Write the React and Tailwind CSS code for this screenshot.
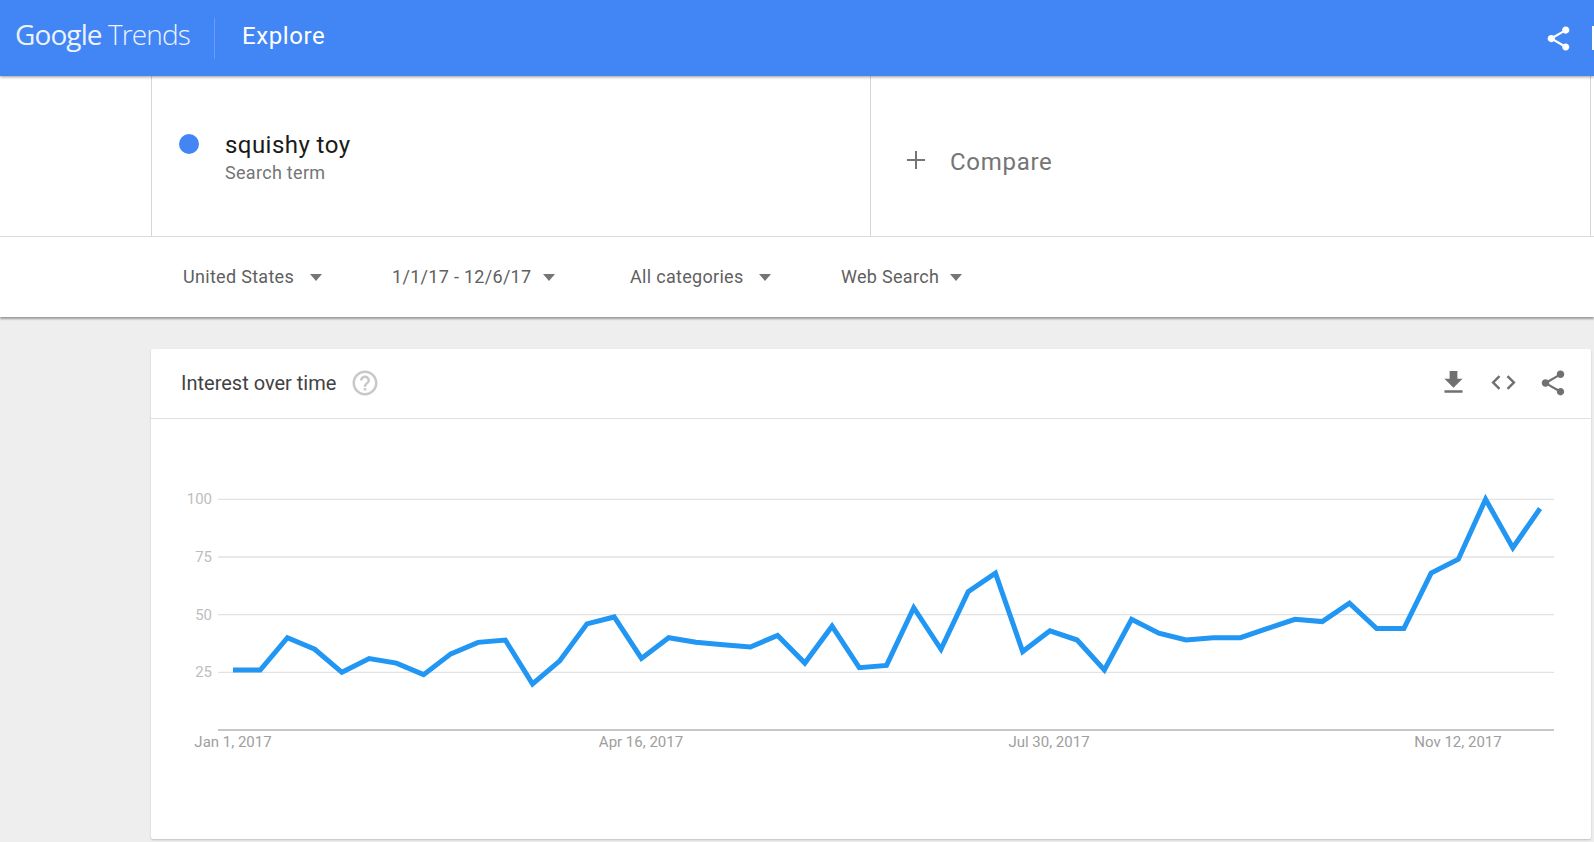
import React from 'react';

const trendData = [26, 26, 40, 35, 25, 31, 29, 24, 33, 38, 39, 20, 30, 46, 49, 31, 40, 38, 37, 36, 41, 29, 45, 27, 28, 53, 35, 60, 68, 34, 43, 39, 26, 48, 42, 39, 40, 40, 44, 48, 47, 55, 44, 44, 68, 74, 100, 79, 96];

const SHARE_PATH = 'M18 16.08c-.76 0-1.44.3-1.96.77L8.91 12.7c.05-.23.09-.46.09-.7s-.04-.47-.09-.7l7.05-4.11c.54.5 1.25.81 2.04.81 1.66 0 3-1.34 3-3s-1.34-3-3-3-3 1.34-3 3c0 .24.04.47.09.7L8.04 9.81C7.5 9.31 6.79 9 6 9c-1.66 0-3 1.34-3 3s1.34 3 3 3c.79 0 1.5-.31 2.04-.81l7.12 4.16c-.05.21-.08.43-.08.65 0 1.61 1.31 2.92 2.92 2.92 1.61 0 2.92-1.31 2.92-2.92s-1.31-2.92-2.92-2.92z';

const Icon = ({ d, className }) => (
  <svg viewBox="0 0 24 24" className={className} fill="currentColor">
    <path d={d} />
  </svg>
);

const Caret = () => <span className="h-0 w-0 border-x-[6.5px] border-t-[7px] border-x-transparent border-t-[#757575]" />;

const Filter = ({ label, className }) => (
  <div className={`flex items-center pb-[1px] text-[18px] tracking-[0.3px] text-[#5f5f5f] ${className}`}>
    <span>{label}</span>
  </div>
);

const TrendChart = () => {
  // svg origin is the card body top-left (151, 419)
  const toX = (i) => 82 + i * 27.23;
  const toY = (v) => 311 - v * 2.307;
  const points = trendData.map((v, i) => `${toX(i)},${toY(v)}`).join(' ');
  const grid = [100, 75, 50, 25];
  const dates = [
    { label: 'Jan 1, 2017', x: 82 },
    { label: 'Apr 16, 2017', x: 490 },
    { label: 'Jul 30, 2017', x: 898 },
    { label: 'Nov 12, 2017', x: 1307 },
  ];

  return (
    <svg width="1440" height="420" className="block" style={{ fontFamily: 'Roboto, sans-serif' }}>
      {grid.map((v) => (
        <g key={v}>
          <line x1="67" x2="1403" y1={toY(v)} y2={toY(v)} stroke="#e2e2e2" strokeWidth="1.3" />
          <text x="61" y={toY(v) + 5} textAnchor="end" fontSize="15" fill="#bdbdbd">{v}</text>
        </g>
      ))}
      <line x1="67" x2="1403" y1="311" y2="311" stroke="#b5b5b5" strokeWidth="1.5" />
      {dates.map((d) => (
        <text key={d.label} x={d.x} y="328" textAnchor="middle" fontSize="15" fill="#9e9e9e">{d.label}</text>
      ))}
      <polyline points={points} fill="none" stroke="#2196f3" strokeWidth="5" />
    </svg>
  );
};

export default function App() {
  return (
    <div className="h-[842px] w-[1594px] overflow-hidden bg-[#eeeeee] font-['Roboto',sans-serif]">
      {/* Top bar */}
      <header className="relative z-10 flex h-[76px] items-center bg-[#4285f4] text-white shadow-[0_1px_3px_rgba(0,0,0,0.4)]">
        <div className="ml-[15px] w-[199px] pb-[8px] font-['Open_Sans',sans-serif] text-[28px] tracking-[-0.9px] opacity-90">
          <span>Google</span> <span className="font-light">Trends</span>
        </div>
        <div className="h-[41px] w-px bg-white/20" />
        <div className="ml-[27px] pb-[4px] text-[24px] tracking-[0.6px]">Explore</div>
        <Icon d={SHARE_PATH} className="ml-auto mr-[21px] h-[29px] w-[29px]" />
        <div className="absolute right-[-6px] top-[26px] h-[24px] w-[8px] border-2 border-white" />
      </header>

      {/* Search terms */}
      <section className="flex h-[161px] border-b border-[#dcdcdc] bg-white pl-[151px] pr-[3px]">
        <div className="flex w-[719px] items-start border-l border-[#d6d6d6] pl-[27px] pt-[54px]">
          <span className="mt-[4px] h-5 w-5 rounded-full bg-[#4285f4]" />
          <div className="ml-[26px]">
            <div className="mt-[1px] text-[24px] leading-7 tracking-[0.45px] text-[#1a1a1a]">squishy toy</div>
            <div className="mt-[2px] text-[18px] leading-6 tracking-[0.3px] text-[#757575]">Search term</div>
          </div>
        </div>
        <div className="flex flex-1 items-center border-x border-[#d6d6d6] pl-[36px] pt-[8px] text-[#757575]">
          <span className="relative h-[18px] w-[18px]">
            <span className="absolute left-0 top-[8px] h-[2px] w-[18px] bg-[#757575]" />
            <span className="absolute left-[8px] top-0 h-[18px] w-[2px] bg-[#757575]" />
          </span>
          <span className="ml-[25px] mt-[4px] text-[24px] tracking-[0.7px]">Compare</span>
        </div>
      </section>

      {/* Filters */}
      <section className="relative flex h-[80px] items-center bg-white pl-[183px] shadow-[0_2px_2px_rgba(0,0,0,0.35)]">
        <Filter label="United States" className="w-[127px]" />
        <Caret />
        <Filter label="1/1/17 - 12/6/17" className="ml-[70px] w-[151px]" />
        <Caret />
        <Filter label="All categories" className="ml-[75px] w-[129px]" />
        <Caret />
        <Filter label="Web Search" className="ml-[70px] w-[109px]" />
        <Caret />
      </section>

      {/* Interest over time card */}
      <section className="ml-[151px] mt-[32px] h-[490px] w-[1440px] rounded-[2px] bg-white shadow-[0_1px_2px_rgba(0,0,0,0.2)]">
        <div className="flex h-[70px] items-center border-b border-[#e0e0e0] pb-[2px] pl-[30px] text-[#616161]">
          <span className="text-[20px] text-[#424242]">Interest over time</span>
          <Icon
            d="M11 18h2v-2h-2v2zm1-16C6.48 2 2 6.48 2 12s4.48 10 10 10 10-4.48 10-10S17.52 2 12 2zm0 18c-4.41 0-8-3.59-8-8s3.59-8 8-8 8 3.59 8 8-3.59 8-8 8zm0-14c-2.21 0-4 1.79-4 4h2c0-1.1.9-2 2-2s2 .9 2 2c0 2-3 1.75-3 5h2c0-2.25 3-2.5 3-5 0-2.21-1.79-4-4-4z"
            className="ml-[14px] h-[30px] w-[30px] text-[#c8c8c8]"
          />
          <div className="ml-auto mr-[23px] flex items-center gap-[20px] text-[#707070]">
            <Icon d="M19 9h-4V3H9v6H5l7 7 7-7zM5 18v2h14v-2H5z" className="h-[31px] w-[31px]" />
            <Icon d="M9.4 16.6L4.8 12l4.6-4.6L8 6l-6 6 6 6 1.4-1.4zm5.2 0l4.6-4.6-4.6-4.6L16 6l6 6-6 6-1.4-1.4z" className="h-[29px] w-[29px]" />
            <Icon d={SHARE_PATH} className="h-[30px] w-[30px]" />
          </div>
        </div>
        <TrendChart />
      </section>
    </div>
  );
}
